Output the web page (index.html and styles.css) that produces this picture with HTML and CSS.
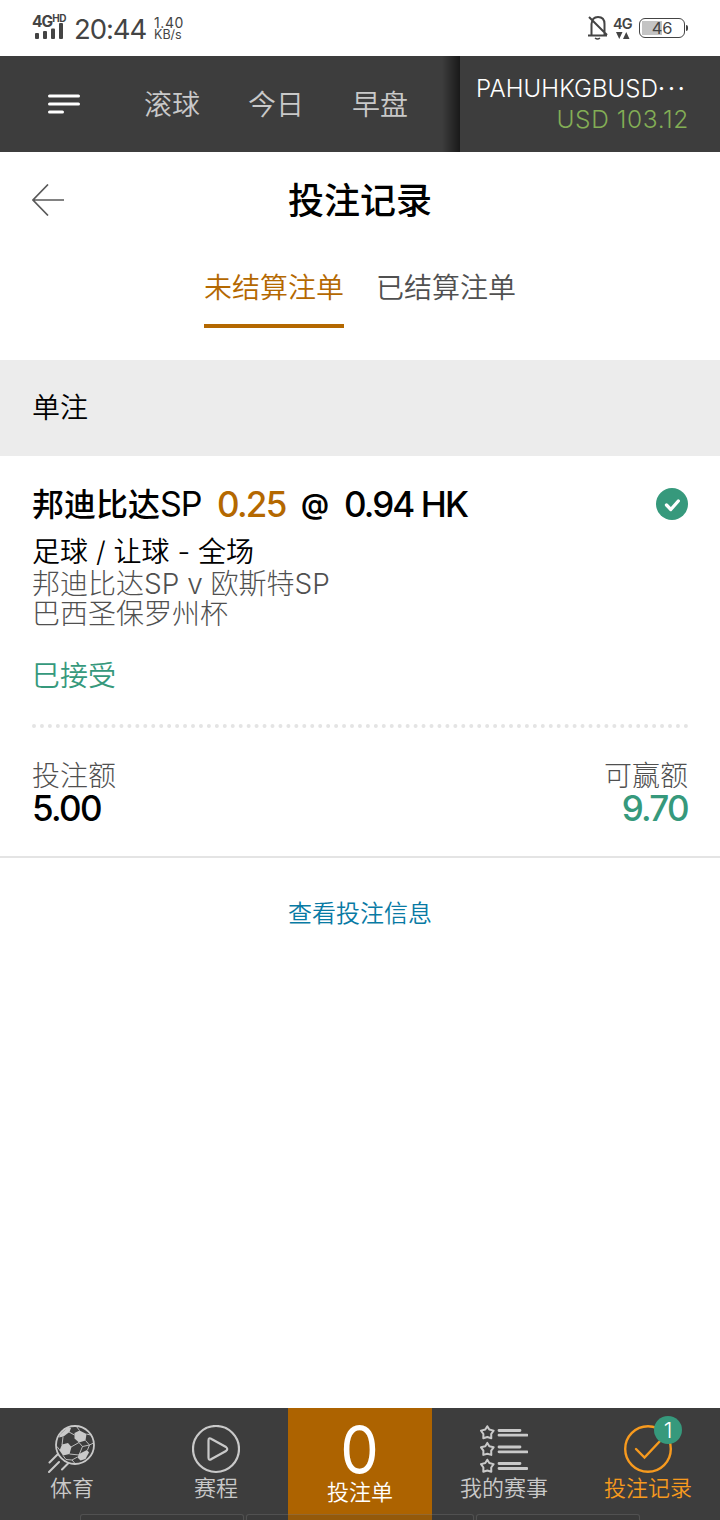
FILE: index.html
```html
<!DOCTYPE html>
<html lang="zh-CN">
<head>
<meta charset="utf-8">
<title>投注记录</title>
<link rel="stylesheet" href="styles.css">
</head>
<body>
<div class="app">
  <div class="status">
    <div class="network"><div class="network-name">4G<sup>HD</sup></div>
      <svg class="signal" width="30" height="16" viewBox="0 0 30 16" fill="#444"><rect y="10" width="4" height="6" rx="1"/><rect x="8" y="8" width="4" height="8" rx="1"/><rect x="16" y="5.500" width="4" height="10.500" rx="1"/><rect x="24" width="4" height="16" rx="1"/></svg>
    </div>
    <div class="clock">20:44</div>
    <div class="speed"><span>1.40</span><span class="unit">KB/s</span></div>
    <div class="status-right">
      <svg width="20" height="26" viewBox="0 0 20 26" fill="none" stroke="#444" stroke-width="2"><path d="M3.500 21V10Q4 3 10 3Q16.500 3 16.500 10V21M0 21.500H19M1 3L19 21"/><path d="M7 24Q9.500 26 12 24" stroke-width="1.500"/></svg>
      <div class="data"><span>4G</span><svg width="14" height="8" viewBox="0 0 14 8" fill="#444"><path d="M0 0h6.500L3.250 7zM7 7h6.500L10.250 0z"/></svg></div>
      <div class="battery">46</div>
    </div>
  </div>

  <header class="topbar">
    <nav class="topnav">
      <svg class="menu" width="32" height="20" viewBox="0 0 32 20" stroke="#fff" stroke-width="3" stroke-linecap="round"><path d="M1.500 2h29M1.500 10h29M1.500 18h13"/></svg>
      <span>滚球</span><span>今日</span><span>早盘</span>
    </nav>
    <div class="account"><div class="user">PAHUHKGBUSD<span class="dots">···</span></div><div class="balance">USD 103.12</div></div>
  </header>

  <main class="content">
    <div class="title-row">
      <svg width="32" height="32" viewBox="0 0 32 32" fill="none" stroke="#5a5a5a" stroke-width="1.700"><path d="M32 16H1M16 .500L1 16l15 15.500"/></svg>
      <h1>投注记录</h1>
    </div>
    <div class="tabs"><div class="tab active">未结算注单</div><div class="tab">已结算注单</div></div>
    <div class="section">单注</div>
    <article class="bet">
      <div class="pick"><span class="team">邦迪比达<span class="latin">SP</span></span><span class="line">0.25</span><span class="at">@</span><span class="odds">0.94 HK</span>
        <svg class="ok" width="32" height="32" viewBox="0 0 32 32" fill="none"><circle cx="16" cy="16" r="16" fill="#36997c"/><path d="M10.500 17l4.300 4.500L22.300 13" stroke="#fff" stroke-width="3.300" stroke-linecap="round" stroke-linejoin="round"/></svg>
      </div>
      <div class="market">足球 / 让球 <span class="dash">-</span> 全场</div>
      <div class="match">邦迪比达SP v 欧斯特SP</div>
      <div class="league">巴西圣保罗州杯</div>
      <div class="state">巳接受</div>
      <svg class="dotted" width="656" height="4" viewBox="0 0 656 4"><path d="M2 2H656" stroke="#e4e4e4" stroke-width="4" stroke-linecap="round" stroke-dasharray="0 7.950"/></svg>
      <div class="amounts">
        <div><div class="label">投注额</div><div class="value">5.00</div></div>
        <div class="win"><div class="label">可赢额</div><div class="value">9.70</div></div>
      </div>
    </article>
    <div class="details">查看投注信息</div>
  </main>

  <footer class="bottom">
    <div class="item">
      <svg width="48" height="50" viewBox="0 0 48 50" fill="none" stroke="#c9c9c9"><circle cx="27" cy="20" r="19" stroke-width="1.800"/><path d="M1.500 37.500l8-8M1 47L11 37M14 44.500l6-6" stroke-width="2" stroke-linecap="round"/><g fill="#c9c9c9" stroke="none"><path d="M26.500 8l5-2.500 7 3.500-1 6.500-6.500 2-4.500-4z"/><path d="M14 19.500l6-1.500 3.500 4-2 7-6.500 1.500-3.500-5z"/><path d="M31 29l8-4 2 2.500-3.500 6.500-5 1.500-3-3z"/><path d="M12 9.500l7-6.500 4 0-1.500 4-6 4.500-4.500 1z"/></g><path d="M21 7l5.500 3M31 17.500l-8 4.500M15 12l-1 8M37.500 15.500l4 4.500-2 5M31 17.500l3.500 4-3.500 8.500-9.500-1M38.500 9l4 1M31.500 5.500l-3-4M15 30.500l3 4 6 .500 5.500-3M24 35l3 3.500M12 25.500l-3-4M34.500 21.500l7-1.500M41.500 20l4-2" stroke-width=".9"/></svg>
      <span>体育</span></div>
    <div class="item">
      <svg width="48" height="50" viewBox="0 0 48 50" fill="none" stroke="#c9c9c9"><circle cx="24" cy="24" r="23" stroke-width="2.200"/><path d="M16.500 15.500V32.500Q16.500 36 19.500 34L34 26Q36.500 24 34 22L19.500 14Q16.500 12 16.500 15.500z" stroke-width="2.200"/></svg>
      <span>赛程</span></div>
    <div class="item slip"><b>0</b><span>投注单</span></div>
    <div class="item">
      <svg width="48" height="50" viewBox="0 0 48 50" fill="none" stroke="#c9c9c9" stroke-linejoin="round"><defs><path id="star" d="M7.300 1.200L9.300 4.500 13.600 5.600 11.200 9 11.300 13.200 7.300 12 3.300 13.200 3.400 9 1 5.600 5.300 4.500z"/></defs><g stroke-width="2"><use href="#star"/><use href="#star" y="16.700"/><use href="#star" y="33.500"/></g><path d="M19 5.500h21M19 10.200h28M19 22h21M19 26.800h28M19 38.500h21M19 43.500h28" stroke-width="2.800" stroke-linecap="round"/></svg>
      <span>我的赛事</span></div>
    <div class="item current">
      <div class="history"><svg width="48" height="50" viewBox="0 0 48 50" fill="none" stroke="#f79a1e" stroke-width="2.400"><circle cx="24" cy="24" r="22.800"/><path d="M12 24l8.500 8.500L37 15" stroke-linecap="round"/></svg><i class="badge">1</i></div>
      <span>投注记录</span></div>
    <div class="edge"><i></i><i class="mid"></i><i></i></div>
  </footer>
</div>
</body>
</html>
```
FILE: styles.css
```css
* { box-sizing: border-box; }
body { margin: 0; }
.app {
  width: 720px; height: 1520px; display: flex; flex-direction: column;
  background: #fff; color: #000; overflow: hidden;
  font-family: Inter, "Noto Sans CJK SC DemiLight", "Noto Sans CJK SC", sans-serif; font-weight: 350;
}
svg { display: block; flex: none; }

.status { height: 56px; display: flex; align-items: flex-start; padding: 14px 32px 0; color: #444; white-space: nowrap; }
.network { width: 42px; }
.network-name { display: flex; height: 9px; font-size: 15.500px; font-weight: 700; line-height: 15px; letter-spacing: -1px; }
.network-name sup { font-size: 10px; line-height: 9px; letter-spacing: -.3px; }
.signal { margin: 0 0 0 3px; }
.clock { width: 80px; font-size: 27.500px; line-height: 31px; font-weight: 400; letter-spacing: -1.100px; }
.speed { display: flex; flex-direction: column; font-size: 14px; line-height: 12px; font-weight: 400; padding-top: 3px; }
.speed span:first-child { letter-spacing: .6px; }
.unit { font-size: 12.500px; }
.status-right { display: flex; margin-left: auto; }
.data { width: 20px; margin: 2px 6px 0 5px; font-size: 14.500px; font-weight: 600; line-height: 15px; letter-spacing: -.9px; }
.data svg { margin: 1px 0 0 3px; }
.battery {
  position: relative; width: 46px; height: 20px; margin: 4px 3px 0 0; border: 1px solid #444; border-radius: 6px;
  font-size: 16.500px; line-height: 18px; font-weight: 400; text-align: center; letter-spacing: -.3px;
  background: linear-gradient(#c4c4c4, #c4c4c4) 2px 2px / 20px 14px no-repeat;
}
.battery::after { content: ""; position: absolute; right: -4px; top: 6px; width: 2px; height: 6px; background: #444; border-radius: 0 2px 2px 0; }

.topbar { height: 96px; display: flex; background: #3d3d3d; }
.topnav { flex: 1; display: flex; align-items: center; padding-left: 48px; color: #c9c9c9; font-size: 28px; line-height: 40px; background: linear-gradient(to left, #191919, #3d3d3d) right / 18px 100% no-repeat; }
.topnav span { width: 104px; padding-top: 1px; }
.menu { margin-right: 64px; }
.topnav span:last-child { width: 60px; }
.account { width: 260px; padding: 17px 31px 0 16px; background: #3d3d3d; color: #fff; font-size: 24px; line-height: 31px; font-weight: 300; white-space: nowrap; }
.user { letter-spacing: .1px; }
.dots { font-weight: 400; letter-spacing: 3px; }
.balance { text-align: right; color: #83ae55; font-size: 24.500px; letter-spacing: .6px; }

.content { flex: 1; }
.title-row { height: 96px; display: grid; grid-template-columns: 32px 1fr 32px; align-items: center; padding: 0 32px; }
h1, .team { font-family: Inter, "Noto Sans CJK SC", sans-serif; font-weight: 500; }
h1 { margin: 0; padding-top: 2px; font-size: 36px; line-height: 48px; text-align: center; }
.tabs { height: 112px; display: flex; justify-content: center; gap: 32px; }
.tab { height: 80px; padding-top: 20px; font-size: 28px; line-height: 40px; color: #505050; }
.active { color: #b46800; border-bottom: 4px solid #b46800; }
.section { height: 96px; background: #ececec; padding: 0 32px; font-size: 28px; line-height: 96px; }
.bet { height: 402px; padding: 28px 32px 0; border-bottom: 2px solid #e4e4e4; font-size: 28px; line-height: 32px; }
.pick { display: flex; height: 40px; align-items: center; font-size: 35px; line-height: 40px; font-weight: 500; white-space: nowrap; letter-spacing: -1.700px; }
.team { width: 185px; padding-top: 1px; font-size: 32px; letter-spacing: 0; }
.latin { font-size: 34px; font-weight: 430; letter-spacing: -1.200px; }
.line { width: 84px; color: #b46800; }
.at { width: 43px; font-size: 28px; font-weight: 600; }
.odds { font-weight: 450; letter-spacing: -1.900px; }
.ok { margin-left: auto; }
.market { margin-top: 12px; }
.match, .league, .label { color: #505050; font-family: Inter, "Noto Sans CJK SC", sans-serif; font-weight: 300; }
.market { font-weight: 320; }
.league { margin-top: -2px; }
.state { margin-top: 30px; color: #36997c; }
.dotted { margin-top: 32px; }
.amounts { display: flex; justify-content: space-between; padding-top: 32px; }
.value { font-size: 35px; font-weight: 500; letter-spacing: -1.700px; }
.win { text-align: right; }
.win .value { color: #36997c; }
.details { padding-top: 40px; text-align: center; font-size: 24px; line-height: 32px; color: #087aa4; }

.bottom { position: relative; height: 112px; display: grid; grid-template-columns: repeat(5, 144px); background: #3d3d3d; color: #c9c9c9; font-size: 22px; line-height: 30px; }
.item { display: flex; flex-direction: column; align-items: center; padding-top: 17px; }
.item span { margin-top: -2px; }
.slip { background: #ad6300; color: #fff; }
.slip b { height: 48px; font-size: 65px; line-height: 49px; font-weight: 400; transform: scaleX(.94); }
.slip span { margin-top: 4px; }
.current { color: #f79a1e; }
.history { position: relative; }
.badge { position: absolute; left: 30px; top: -9px; width: 28px; height: 28px; border-radius: 50%; background: #36997c; color: #fff; font-size: 22px; line-height: 28px; font-style: normal; font-weight: 350; text-align: center; }
.edge { position: absolute; left: 80px; right: 80px; bottom: 0; height: 6px; display: flex; gap: 2px; }
.edge i { flex: 164; border: 1px solid rgba(150,150,150,.25); border-bottom: 0; border-radius: 3px 3px 0 0; background: rgba(50,50,50,.2); }
.edge .mid { flex: 229; }
```
